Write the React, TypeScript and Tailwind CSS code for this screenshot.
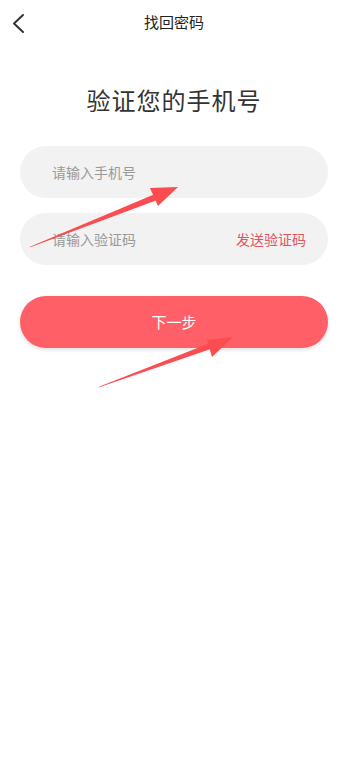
import React from "react";

export default function App() {
  const font = { fontFamily: '"Noto Sans CJK SC", "Noto Sans", sans-serif' };
  return (
    <div className="relative w-[348px] h-[772px] bg-white overflow-hidden" style={font}>
      <div className="relative h-[45px] flex items-center justify-center">
        <svg className="absolute left-[8px] top-[10px]" width="22" height="26" viewBox="0 0 22 26">
          <path d="M15 5 L6 13.5 L15 22" fill="none" stroke="#333" strokeWidth="2" strokeLinecap="round" strokeLinejoin="round" />
        </svg>
        <span className="text-[15px] text-[#222]">找回密码</span>
      </div>
      <div className="mt-[37px] text-center text-[24px] leading-[36px] text-[#333] tracking-[1px]">验证您的手机号</div>
      <div className="mt-[28px] px-[20px] flex flex-col gap-[15px]">
        <div className="h-[52px] rounded-full bg-[#f2f2f2] flex items-center pl-[32px] text-[14px] text-[#999]">请输入手机号</div>
        <div className="h-[52px] rounded-full bg-[#f2f2f2] flex items-center justify-between pl-[32px] pr-[22px] text-[14px]">
          <span className="text-[#999]">请输入验证码</span>
          <span className="text-[#e25462]">发送验证码</span>
        </div>
      </div>
      <div className="mt-[31px] px-[20px]">
        <div className="h-[52px] rounded-full bg-[#ff5f66] shadow-[0_2px_4px_rgba(0,0,0,0.12)] flex items-center justify-center text-white text-[15px]">下一步</div>
      </div>
      <svg className="absolute left-0 top-0 pointer-events-none" width="348" height="772" viewBox="0 0 348 772">
        <polygon points="29.5,247.5 30.5,246.5 161,191.5 164,197.5" fill="#fb4c50" />
        <polygon points="150,188 178,187 158,206" fill="#fb4c50" />
        <polygon points="98.5,387.5 99.5,386.5 216.5,340.5 219.5,346" fill="#fb4c50" />
        <polygon points="207,340 233,337 212,357" fill="#fb4c50" />
      </svg>
    </div>
  );
}
